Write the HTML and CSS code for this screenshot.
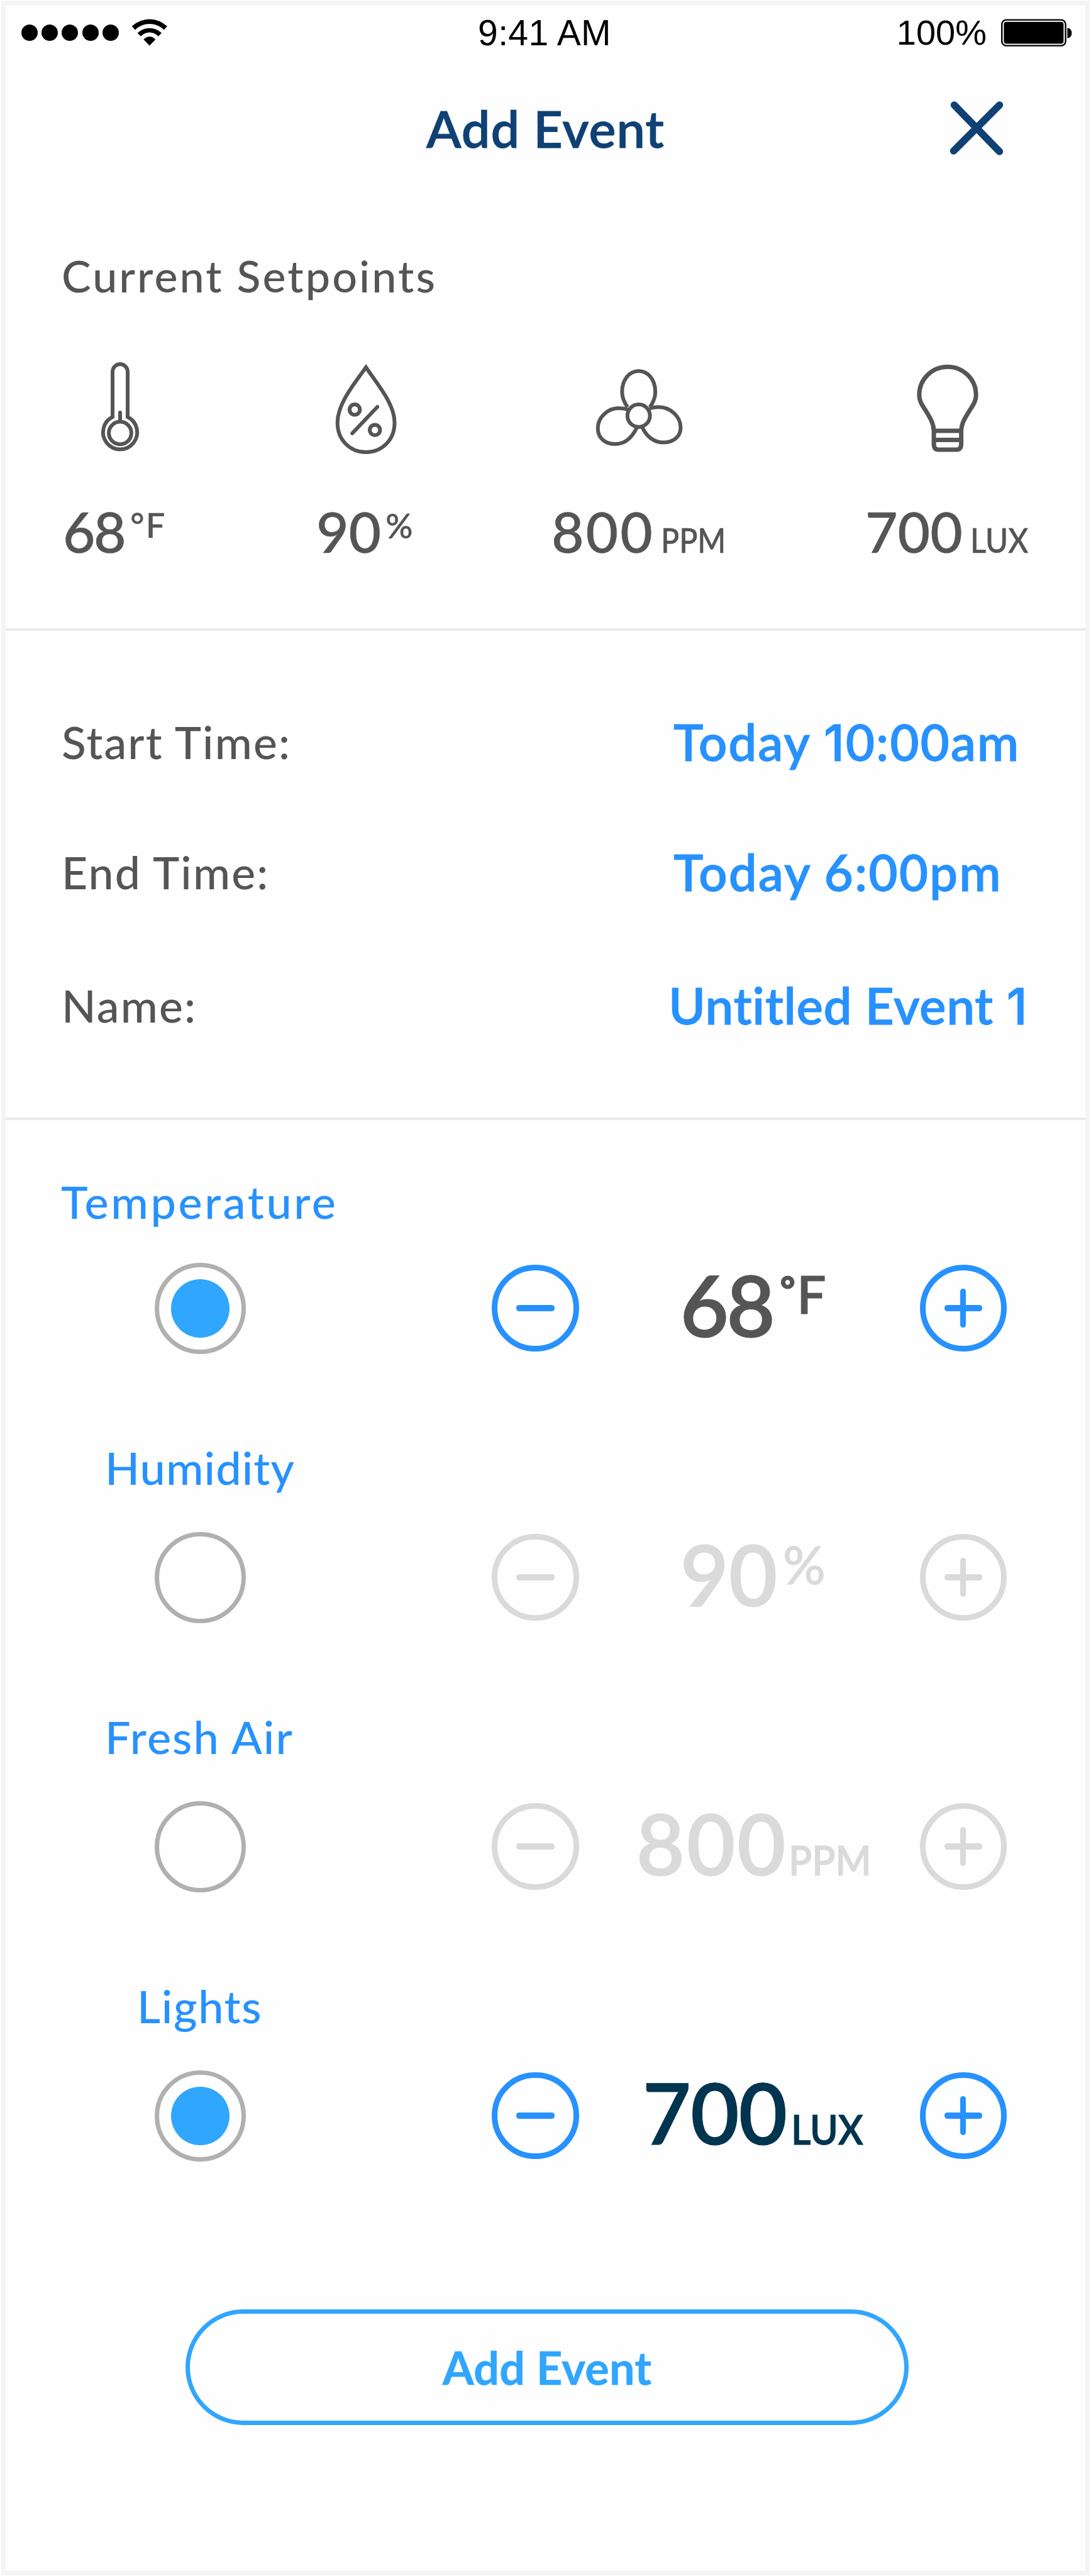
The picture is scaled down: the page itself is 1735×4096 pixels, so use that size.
FILE: index.html
```html
<!DOCTYPE html>
<html lang="en">
<head>
<meta charset="utf-8">
<title>Add Event</title>
<link rel="stylesheet" href="styles.css">
</head>
<body>
<main class="screen">
  <div class="status-bar">
    <div class="status-left">
      <div class="signal"><i class="dot"></i><i class="dot"></i><i class="dot"></i><i class="dot"></i><i class="dot"></i></div>
      <svg class="wifi" width="58" height="46" viewBox="0 0 58 46">
        <path d="M.7 12.8A40.6 40.6 0 0 1 56.9 12.8L51.8 18.5A32.4 32.4 0 0 0 5.8 18.5Z"/>
        <path d="M9.7 23.6A27 27 0 0 1 47.9 23.6L42.7 28.7A18.7 18.7 0 0 0 14.9 28.7Z"/>
        <path d="M19.4 33.9A11.7 11.7 0 0 1 38.2 33.9L28.8 43.5Z"/>
      </svg>
    </div>
    <div class="clock">9:41 AM</div>
    <div class="status-right">
      <span class="charge">100%</span>
      <svg width="115" height="46" viewBox="0 0 115 46">
        <rect x="2.2" y="2.6" width="101.4" height="41" rx="7" fill="none" stroke="#000" stroke-width="2.4"/>
        <rect x="5.4" y="5.8" width="95" height="34.6" rx="4"/>
        <path d="M106.4 15.5c4 0 7 3.4 7 8.1s-3 8.1-7 8.1z"/>
      </svg>
    </div>
  </div>

  <header class="header">
    <h1 class="title">Add Event</h1>
    <button class="close" aria-label="Close">
      <svg width="86" height="88" viewBox="0 0 86 88">
        <path d="M7.5 7L79.5 81M79.5 7L6.5 80"/>
      </svg>
    </button>
  </header>

  <section class="setpoints">
    <h2 class="section-title">Current Setpoints</h2>
    <div class="setpoint-grid">
      <div class="setpoint">
        <svg class="icon icon-temp" viewBox="0 0 150 150">
          <path d="M63 89V17a12 12 0 0 1 24 0V89A27.1 27.1 0 1 1 63 89Z"/>
          <circle cx="75" cy="114.5" r="17.9"/>
          <path d="M75 82V96" stroke-linecap="round"/>
        </svg>
        <div class="reading">68<span class="unit unit-degree">°F</span></div>
      </div>
      <div class="setpoint">
        <svg class="icon icon-humidity" viewBox="0 0 150 150">
          <path d="M75 10C56 37 29.7 68 29.7 98C29.7 126 50 145 75 145C100 145 120.5 126 120.5 98C120.5 68 93 37 75 10Z"/>
          <circle cx="57.1" cy="77.3" r="8.2"/>
          <circle cx="89.2" cy="109.7" r="8.2"/>
          <path d="M93.1 73L53.2 115" stroke-linecap="round"/>
        </svg>
        <div class="reading reading-90">90<span class="unit unit-percent">%</span></div>
      </div>
      <div class="setpoint">
        <svg class="icon icon-air" viewBox="0 0 150 150">
          <circle cx="73.7" cy="87" r="17.9"/>
          <path d="M56 73.5C50 65 47.3 57 47.3 49.2C47.3 30 58.5 16 73.7 16C89 16 100.1 30 100.1 49.2C100.1 57 97.5 65 91.5 73.5"/>
          <path d="M91 75.5C97 73.6 101 73.3 105.2 73.3C124 73.3 140.4 88 140.4 106C140.4 120 129 129.6 113.2 129.6C98 129.6 86 120 79.5 105.5"/>
          <path d="M57 77.5C51 75.3 46 75 42 75C24 75 8.7 90 8.7 107C8.7 122 20 132.1 36.5 132.1C52 132.1 63 122 71 105.5"/>
        </svg>
        <div class="reading reading-800">800<span class="unit unit-ppm">PPM</span></div>
      </div>
      <div class="setpoint">
        <svg class="icon icon-light" viewBox="0 0 150 150">
          <path d="M53.1 111C52.5 99 48 92 41.5 81C34.5 70 29.8 64 29.8 54.3C29.8 29 50 9.3 75 9.3S120.2 29 120.2 54.3C120.2 64 115.5 70 108.5 81C102 92 97 99 96.6 111V132Q96.6 141 89 141H60.7Q53.1 141 53.1 132Z"/>
          <path d="M53 111H97M53 125.5H97"/>
        </svg>
        <div class="reading reading-700">700<span class="unit unit-lux">LUX</span></div>
      </div>
    </div>
  </section>

  <section class="details">
    <div class="detail"><span class="detail-label">Start Time:</span><span class="detail-value start">Today <span class="one">1</span>0:00am</span></div>
    <div class="detail"><span class="detail-label">End Time:</span><span class="detail-value end">Today 6:00pm</span></div>
    <div class="detail detail-name"><span class="detail-label">Name:</span><span class="detail-value name">Untitled Event <span class="one">1</span></span></div>
  </section>

  <section class="controls">
    <div class="control control-temperature">
      <div class="control-label">Temperature</div>
      <div class="control-row">
        <span class="radio checked"></span>
        <button class="step minus" aria-label="Decrease temperature"></button>
        <div class="amount">68<span class="amount-degree">°</span><span class="amount-f">F</span></div>
        <button class="step plus" aria-label="Increase temperature"></button>
      </div>
    </div>
    <div class="control control-humidity disabled">
      <div class="control-label">Humidity</div>
      <div class="control-row">
        <span class="radio"></span>
        <button class="step minus" aria-label="Decrease humidity"></button>
        <div class="amount">90<span class="amount-percent">%</span></div>
        <button class="step plus" aria-label="Increase humidity"></button>
      </div>
    </div>
    <div class="control control-air disabled">
      <div class="control-label">Fresh Air</div>
      <div class="control-row">
        <span class="radio"></span>
        <button class="step minus" aria-label="Decrease fresh air"></button>
        <div class="amount">800<span class="amount-unit">PPM</span></div>
        <button class="step plus" aria-label="Increase fresh air"></button>
      </div>
    </div>
    <div class="control control-lights">
      <div class="control-label">Lights</div>
      <div class="control-row">
        <span class="radio checked"></span>
        <button class="step minus" aria-label="Decrease lights"></button>
        <div class="amount">700<span class="amount-unit">LUX</span></div>
        <button class="step plus" aria-label="Increase lights"></button>
      </div>
    </div>
  </section>

  <button class="submit">Add Event</button>
</main>
</body>
</html>
```
FILE: styles.css
```css
* { box-sizing: border-box; }

body {
  margin: 0;
  background: #fff;
  font-family: Lato, "Open Sans", sans-serif;
}

button {
  padding: 0;
  background: none;
  border: 0;
  font-family: inherit;
}

.screen {
  display: flex;
  flex-direction: column;
  width: 1731px;
  height: 4094px;
  margin: 1px 2px;
  border: 7px solid #f4f4f4;
  background: #fefefe;
}

/* Status bar */
.status-bar {
  display: grid;
  grid-template-columns: 1fr auto 1fr;
  align-items: center;
  height: 88px;
  padding: 0 20px 0 25px;
  font: 56px/88px "Liberation Sans", Arial, sans-serif;
  color: #000;
}
.status-left, .status-right, .signal { display: flex; align-items: center; }
.status-left { gap: 20px; }
.signal { gap: 6.2px; }
.dot { width: 26px; height: 26px; border-radius: 50%; background: #000; }
.status-right { justify-content: flex-end; gap: 22px; }
.charge { margin-top: -1px; }
.clock { padding: 0 8px 0 0; font-size: 57px; letter-spacing: .4px; }

/* Header */
.header {
  display: grid;
  grid-template-columns: 216px 1fr 216px;
  align-items: center;
  height: 216px;
}
.title {
  grid-column: 2;
  margin: 0;
  font-size: 81px;
  font-weight: 600;
  letter-spacing: 1px;
  line-height: 216px;
  text-align: center;
  color: #0f4174;
  -webkit-text-stroke: .8px;
}
.close { display: flex; }
.close svg { fill: none; stroke: #0f4174; stroke-width: 11.5; stroke-linecap: round; }

/* Current setpoints */
.setpoints {
  height: 691px;
  padding-top: 84px;
  border-bottom: 4px solid #e9e9e9;
  color: #555;
}
.section-title {
  margin: 0 0 94px 89px;
  font-size: 70px;
  font-weight: 500;
  letter-spacing: 3.07px;
  line-height: 84px;
}
.setpoint-grid {
  display: grid;
  grid-template-columns: 403px 374px 499px 1fr;
  padding-left: 91px;
}
.icon {
  display: block;
  width: 150px;
  height: 150px;
  margin-bottom: 61px;
  fill: none;
  stroke: currentColor;
  stroke-width: 6;
}
.icon-temp { margin-left: 16px; }
.icon-humidity { margin-left: 4px; }
.icon-air { margin-left: 65px; }
.icon-light { margin-left: 56px; stroke-width: 7; }
.reading {
  font-size: 89px;
  font-weight: 500;
  letter-spacing: -2.5px;
  line-height: 120px;
  white-space: nowrap;
  -webkit-text-stroke: .5px;
}
.reading-90, .reading-700 { letter-spacing: 0; }
.reading-800 { letter-spacing: 3px; }
.unit {
  display: inline-block;
  font-size: 53.6px;
  line-height: 0;
  letter-spacing: 0;
  transform-origin: 0 50%;
}
.unit-degree { margin-left: 9px; letter-spacing: 2.5px; vertical-align: 24.5px; }
.unit-percent { margin-left: 7px; vertical-align: 23px; }
.unit-ppm { margin-left: 10px; transform: scaleX(.9); }
.unit-lux { margin-left: 12px; transform: scaleX(.915); }

/* Event details */
.details {
  height: 778px;
  padding: 126px 0 0 89px;
  border-bottom: 4px solid #e9e9e9;
}
.detail {
  display: grid;
  grid-template-columns: 973px 1fr;
  margin-bottom: 107px;
  line-height: 100px;
  white-space: nowrap;
}
.detail-name { margin-top: 112px; }
.detail-label { font-size: 71.5px; font-weight: 500; letter-spacing: 2.15px; color: #555; }
.detail-value { font-size: 80px; font-weight: 600; color: #2791ff; -webkit-text-stroke: .8px; }
.start { letter-spacing: 1.85px; }
.end { letter-spacing: 2px; }
.name { margin-left: -8px; letter-spacing: .6px; }
.one { font-family: Inter, sans-serif; font-weight: 500; line-height: 0; }

/* Adjustable values */
.controls {
  display: flex;
  flex-direction: column;
  gap: 138px;
  padding-top: 87px;
}
.control-label {
  margin-bottom: 61px;
  font-size: 72px;
  font-weight: 500;
  line-height: 84px;
  color: #2791ff;
}
.control-temperature .control-label { margin: 0 0 55.5px 88px; letter-spacing: 3.6px; }
.control-humidity .control-label { margin-left: 158px; letter-spacing: 1.1px; }
.control-air .control-label { margin-left: 158px; letter-spacing: 2.1px; }
.control-lights .control-label { margin-left: 209px; letter-spacing: 1.66px; }
.control-row {
  display: grid;
  grid-template-columns: 536.5px 138.5px 542.2px 138.5px;
  align-items: center;
  height: 145px;
  padding-left: 236.5px;
}
.radio {
  display: flex;
  align-items: center;
  justify-content: center;
  width: 145px;
  height: 145px;
  border: 7px solid #b0b0b0;
  border-radius: 50%;
}
.checked::before {
  content: "";
  width: 93px;
  height: 93px;
  border-radius: 50%;
  background: #30a6ff;
}
.step {
  display: grid;
  place-items: center;
  width: 138.5px;
  height: 138.5px;
  border: 9px solid currentColor;
  border-radius: 50%;
  color: #2791ff;
}
.step::before, .plus::after {
  content: "";
  grid-area: 1 / 1;
  width: 60.5px;
  height: 10px;
  border-radius: 4.5px;
  background: currentColor;
}
.plus::after { width: 9px; height: 62px; }
.amount {
  align-self: start;
  padding-left: 161px;
  font-size: 134px;
  font-weight: 600;
  letter-spacing: -4px;
  line-height: 133px;
  white-space: nowrap;
  color: #555;
  -webkit-text-stroke: 1px;
}
.control-humidity .amount { letter-spacing: -.5px; }
.control-air .amount { padding-left: 91px; letter-spacing: 2.5px; }
.control-lights .amount { padding-left: 101px; letter-spacing: -1.2px; color: #00344f; }
.amount span { display: inline-block; line-height: 0; letter-spacing: 0; }
.amount-degree { margin-left: 12px; font-size: 56px; font-weight: 800; vertical-align: 55px; }
.amount-f { margin-left: 3px; font-size: 82px; vertical-align: 37px; }
.amount-percent { margin-left: 9px; font-size: 84px; font-weight: 500; vertical-align: 35px; }
.amount-unit { margin-left: 7px; font-size: 66px; transform: scaleX(.92); transform-origin: 0 50%; }
.control-air .amount-unit { margin-left: 2px; transform: scaleX(.925); }
.disabled .step, .disabled .amount { color: #dadada; }

.submit {
  width: 1150px;
  height: 184.5px;
  margin: 235px 0 0 286px;
  border: 7px solid #30a6ff;
  border-radius: 93px;
  font-size: 72px;
  font-weight: 700;
  letter-spacing: .2px;
  color: #30a6ff;
  -webkit-text-stroke: .5px;
}
```
